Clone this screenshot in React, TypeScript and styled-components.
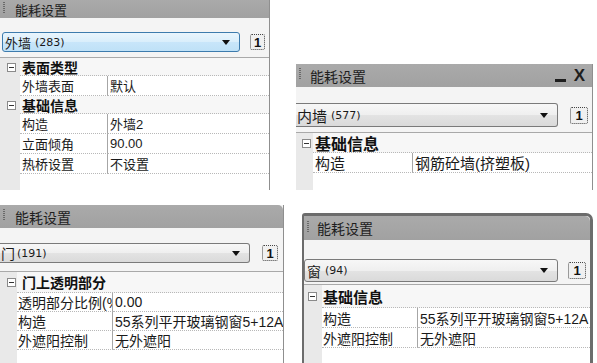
import React from 'react';
import styled, { createGlobalStyle } from 'styled-components';

const Global = createGlobalStyle`
  html, body { margin: 0; padding: 0; background: #fff; }
  body { font-family: "Liberation Sans", "Noto Sans CJK SC", sans-serif; color: #1a1a1a; }
`;

type RowData =
  | { kind: 'cat'; text: string }
  | { kind: 'prop'; label: string; value: string };

interface PanelCfg {
  id: string;
  w: number; h: number; ml: number; mt: number;
  frame?: boolean;
  round?: boolean;
  titleH: number; titleFont: number; titlePad: number;
  controls?: boolean;
  dropPadTop: number; dropPadLeft: number; dropW: number; dropH: number;
  cut: boolean; focus: boolean;
  gap: number; boxW: number; boxH: number;
  comboMain: string; comboNum: string; numGap: number;
  sepGap: number;
  gutter: number; iconPad: number; labelW: number; labelPad: number; catPad: number;
  font: number; catFont: number;
  catH: number; rowH: number;
  rows: RowData[];
}

const panels: PanelCfg[][] = [
  [
    {
      id: 'p1', w: 270, h: 190, ml: 0, mt: 0,
      titleH: 18, titleFont: 13, titlePad: 15,
      dropPadTop: 14, dropPadLeft: 2, dropW: 238, dropH: 20, cut: false, focus: true,
      gap: 10, boxW: 15, boxH: 16,
      comboMain: '外墙', comboNum: '(283)', numGap: 4,
      sepGap: 5,
      gutter: 20, iconPad: 7, labelW: 88, labelPad: 2, catPad: 2,
      font: 13, catFont: 14, catH: 18, rowH: 20,
      rows: [
        { kind: 'cat', text: '表面类型' },
        { kind: 'prop', label: '外墙表面', value: '默认' },
        { kind: 'cat', text: '基础信息' },
        { kind: 'prop', label: '构造', value: '外墙2' },
        { kind: 'prop', label: '立面倾角', value: '90.00' },
        { kind: 'prop', label: '热桥设置', value: '不设置' },
      ],
    },
    {
      id: 'p2', w: 297, h: 126, ml: 26, mt: 64,
      titleH: 23, titleFont: 14, titlePad: 14, controls: true,
      dropPadTop: 16, dropPadLeft: 0, dropW: 262, dropH: 24, cut: true, focus: false,
      gap: 12, boxW: 18, boxH: 17,
      comboMain: '内墙', comboNum: '(577)', numGap: 4,
      sepGap: 5,
      gutter: 17, iconPad: 6, labelW: 100, labelPad: 2, catPad: 2,
      font: 15, catFont: 16, catH: 20, rowH: 20,
      rows: [
        { kind: 'cat', text: '基础信息' },
        { kind: 'prop', label: '构造', value: '钢筋砼墙(挤塑板)' },
      ],
    },
  ],
  [
    {
      id: 'p3', w: 284, h: 158, ml: 0, mt: 0, round: true,
      titleH: 23, titleFont: 14, titlePad: 15,
      dropPadTop: 15, dropPadLeft: 0, dropW: 250, dropH: 20, cut: true, focus: false,
      gap: 12, boxW: 16, boxH: 16,
      comboMain: '门', comboNum: '(191)', numGap: 2,
      sepGap: 8,
      gutter: 17, iconPad: 7, labelW: 96, labelPad: 1, catPad: 5,
      font: 14, catFont: 14, catH: 21, rowH: 19,
      rows: [
        { kind: 'cat', text: '门上透明部分' },
        { kind: 'prop', label: '透明部分比例(%)', value: '0.00' },
        { kind: 'prop', label: '构造', value: '55系列平开玻璃钢窗5+12A' },
        { kind: 'prop', label: '外遮阳控制', value: '无外遮阳' },
      ],
    },
    {
      id: 'p4', w: 291, h: 150, ml: 18, mt: 8, frame: true, round: true,
      titleH: 24, titleFont: 14, titlePad: 13,
      dropPadTop: 19, dropPadLeft: 0, dropW: 254, dropH: 23, cut: false, focus: false,
      gap: 10, boxW: 18, boxH: 17,
      comboMain: '窗', comboNum: '(94)', numGap: 4,
      sepGap: 2,
      gutter: 18, iconPad: 4, labelW: 96, labelPad: 1, catPad: 1,
      font: 14, catFont: 15, catH: 23, rowH: 20,
      rows: [
        { kind: 'cat', text: '基础信息' },
        { kind: 'prop', label: '构造', value: '55系列平开玻璃钢窗5+12A' },
        { kind: 'prop', label: '外遮阳控制', value: '无外遮阳' },
      ],
    },
  ],
];

const Canvas = styled.div`
  width: 597px;
  height: 363px;
  overflow: hidden;
  background: #fff;
  display: grid;
  grid-template-rows: 205px 158px;
`;

const PanelRow = styled.div`
  display: flex;
  align-items: flex-start;
  overflow: hidden;
`;

const Panel = styled.div<{ $w: number; $h: number; $ml: number; $mt: number; $frame?: boolean }>`
  flex: none;
  box-sizing: border-box;
  width: ${p => p.$w}px;
  height: ${p => p.$h}px;
  margin-left: ${p => p.$ml}px;
  margin-top: ${p => p.$mt}px;
  display: flex;
  flex-direction: column;
  overflow: hidden;
  background: #f4f4f4;
  border-right: 1px solid #8f8f8f;
  ${p => p.$frame ? `
    border: 0 solid #6c6c6c;
    border-width: 3px 3px 0 2px;
    border-top-right-radius: 7px;
    border-top-left-radius: 3px;
  ` : ''}
`;

const TitleBar = styled.div<{ $h: number; $font: number; $round?: boolean }>`
  flex: none;
  height: ${p => p.$h}px;
  display: flex;
  align-items: center;
  padding-left: 3px;
  background: linear-gradient(#aaaaaa, #a1a1a1);
  font-size: ${p => p.$font}px;
  color: #1e1e1e;
  ${p => p.$round ? 'border-top-right-radius: 5px;' : ''}
`;

const Grip = styled.span`
  width: 2px;
  height: 12px;
  margin-top: -3px;
  background: repeating-linear-gradient(#5a5a5a 0 1px, transparent 1px 2px);
  opacity: 0.8;
`;

const TitleText = styled.span<{ $pad: number }>`
  margin-left: ${p => p.$pad - 5}px;
  white-space: nowrap;
`;

const Controls = styled.div`
  margin-left: auto;
  padding-right: 7px;
  display: flex;
  align-items: center;
  gap: 8px;
`;

const MinBtn = styled.span`
  width: 11px;
  height: 3px;
  margin-top: 9px;
  background: #1e1e1e;
`;

const CloseBtn = styled.span`
  font-family: "Liberation Sans", sans-serif;
  font-weight: 900;
  font-size: 17px;
  line-height: 1;
  color: #1e1e1e;
`;

const DropRow = styled.div<{ $pt: number; $pl: number; $gap: number }>`
  flex: none;
  display: flex;
  align-items: center;
  padding-top: ${p => p.$pt}px;
  padding-left: ${p => p.$pl}px;
  gap: ${p => p.$gap}px;
`;

const Combo = styled.div<{ $w: number; $h: number; $cut: boolean; $focus: boolean; $font: number }>`
  flex: none;
  box-sizing: border-box;
  width: ${p => p.$w}px;
  height: ${p => p.$h}px;
  display: flex;
  align-items: center;
  padding: 0 9px 0 ${p => (p.$cut ? 1 : 2)}px;
  border: 1px solid ${p => (p.$focus ? '#3d7bad' : '#7a7a7a')};
  border-radius: 3px;
  ${p => p.$cut ? 'border-left: none; border-top-left-radius: 0; border-bottom-left-radius: 0;' : ''}
  background: ${p => p.$focus
    ? 'linear-gradient(#e9f5fd, #d9eefb 50%, #c8e6fa 51%, #bfe1f7)'
    : 'linear-gradient(#f7f7f7, #efefef 50%, #e3e3e3 51%, #dadada)'};
  font-size: ${p => p.$font}px;
  white-space: nowrap;
`;

const ComboNum = styled.span<{ $gap: number }>`
  margin-left: ${p => p.$gap}px;
  font-family: "DejaVu Sans", "Liberation Sans", sans-serif;
  font-size: 11px;
`;

const Arrow = styled.span`
  margin-left: auto;
  width: 0;
  height: 0;
  border-left: 4px solid transparent;
  border-right: 4px solid transparent;
  border-top: 5px solid #111;
`;

const Counter = styled.div<{ $w: number; $h: number }>`
  flex: none;
  box-sizing: border-box;
  width: ${p => p.$w}px;
  height: ${p => p.$h}px;
  border: 1px dotted #444;
  border-radius: 2px;
  background: #f0f0f0;
  display: flex;
  align-items: center;
  justify-content: center;
  font-family: "Liberation Sans", sans-serif;
  font-weight: bold;
  font-size: 13px;
  color: #111;
`;

const Separator = styled.div<{ $mt: number }>`
  flex: none;
  height: 1px;
  margin-top: ${p => p.$mt}px;
  background: #a9a9a9;
`;

const Grid = styled.div<{ $g: number }>`
  flex: 1;
  display: flex;
  flex-direction: column;
  background: linear-gradient(to right, #e9e9e9 ${p => p.$g}px, #ffffff ${p => p.$g}px);
`;

const GRow = styled.div<{ $h: number }>`
  flex: none;
  height: ${p => p.$h}px;
  display: flex;
`;

const Gutter = styled.div<{ $w: number; $pad: number }>`
  flex: none;
  width: ${p => p.$w}px;
  box-sizing: border-box;
  padding-left: ${p => p.$pad}px;
  display: flex;
  align-items: center;
`;

const CatCell = styled.div<{ $font: number; $pad: number }>`
  flex: 1;
  min-width: 0;
  display: flex;
  align-items: center;
  padding-left: ${p => p.$pad}px;
  font-size: ${p => p.$font}px;
  font-weight: bold;
  color: #111;
  background: #f7f7f7;
  border-bottom: 1px dotted #b8b8b8;
  white-space: nowrap;
`;

const LabelCell = styled.div<{ $w: number; $font: number; $pad: number }>`
  flex: none;
  box-sizing: border-box;
  width: ${p => p.$w}px;
  display: flex;
  align-items: center;
  padding-left: ${p => p.$pad}px;
  font-size: ${p => p.$font}px;
  border-right: 1px solid #a6a6a6;
  border-bottom: 1px dotted #b8b8b8;
  white-space: nowrap;
  overflow: hidden;
`;

const ValueCell = styled.div<{ $font: number }>`
  flex: 1;
  min-width: 0;
  display: flex;
  align-items: center;
  padding-left: 2px;
  font-size: ${p => p.$font}px;
  border-bottom: 1px dotted #b8b8b8;
  white-space: nowrap;
  overflow: hidden;
`;

const Minus = () => (
  <svg width="9" height="9" viewBox="0 0 9 9">
    <rect x="0.5" y="0.5" width="8" height="8" fill="#fff" stroke="#8a8a8a" />
    <line x1="2" y1="4.5" x2="7" y2="4.5" stroke="#333" />
  </svg>
);

const PropPanel: React.FC<{ c: PanelCfg }> = ({ c }) => (
  <Panel $w={c.w} $h={c.h} $ml={c.ml} $mt={c.mt} $frame={c.frame}>
    <TitleBar $h={c.titleH} $font={c.titleFont} $round={c.round}>
      <Grip />
      <TitleText $pad={c.titlePad}>能耗设置</TitleText>
      {c.controls && (
        <Controls>
          <MinBtn />
          <CloseBtn>X</CloseBtn>
        </Controls>
      )}
    </TitleBar>
    <DropRow $pt={c.dropPadTop} $pl={c.dropPadLeft} $gap={c.gap}>
      <Combo $w={c.dropW} $h={c.dropH} $cut={c.cut} $focus={c.focus} $font={c.font}>
        <span>{c.comboMain}</span>
        <ComboNum $gap={c.numGap}>{c.comboNum}</ComboNum>
        <Arrow />
      </Combo>
      <Counter $w={c.boxW} $h={c.boxH}>1</Counter>
    </DropRow>
    <Separator $mt={c.sepGap} />
    <Grid $g={c.gutter}>
      {c.rows.map((r, i) =>
        r.kind === 'cat' ? (
          <GRow key={i} $h={c.catH}>
            <Gutter $w={c.gutter} $pad={c.iconPad}>
              <Minus />
            </Gutter>
            <CatCell $font={c.catFont} $pad={c.catPad}>{r.text}</CatCell>
          </GRow>
        ) : (
          <GRow key={i} $h={c.rowH}>
            <Gutter $w={c.gutter} $pad={c.iconPad} />
            <LabelCell $w={c.labelW} $font={c.font} $pad={c.labelPad}>{r.label}</LabelCell>
            <ValueCell $font={c.font}>{r.value}</ValueCell>
          </GRow>
        )
      )}
    </Grid>
  </Panel>
);

export default function App() {
  return (
    <>
      <Global />
      <Canvas>
        {panels.map((row, i) => (
          <PanelRow key={i}>
            {row.map(c => (
              <PropPanel key={c.id} c={c} />
            ))}
          </PanelRow>
        ))}
      </Canvas>
    </>
  );
}
